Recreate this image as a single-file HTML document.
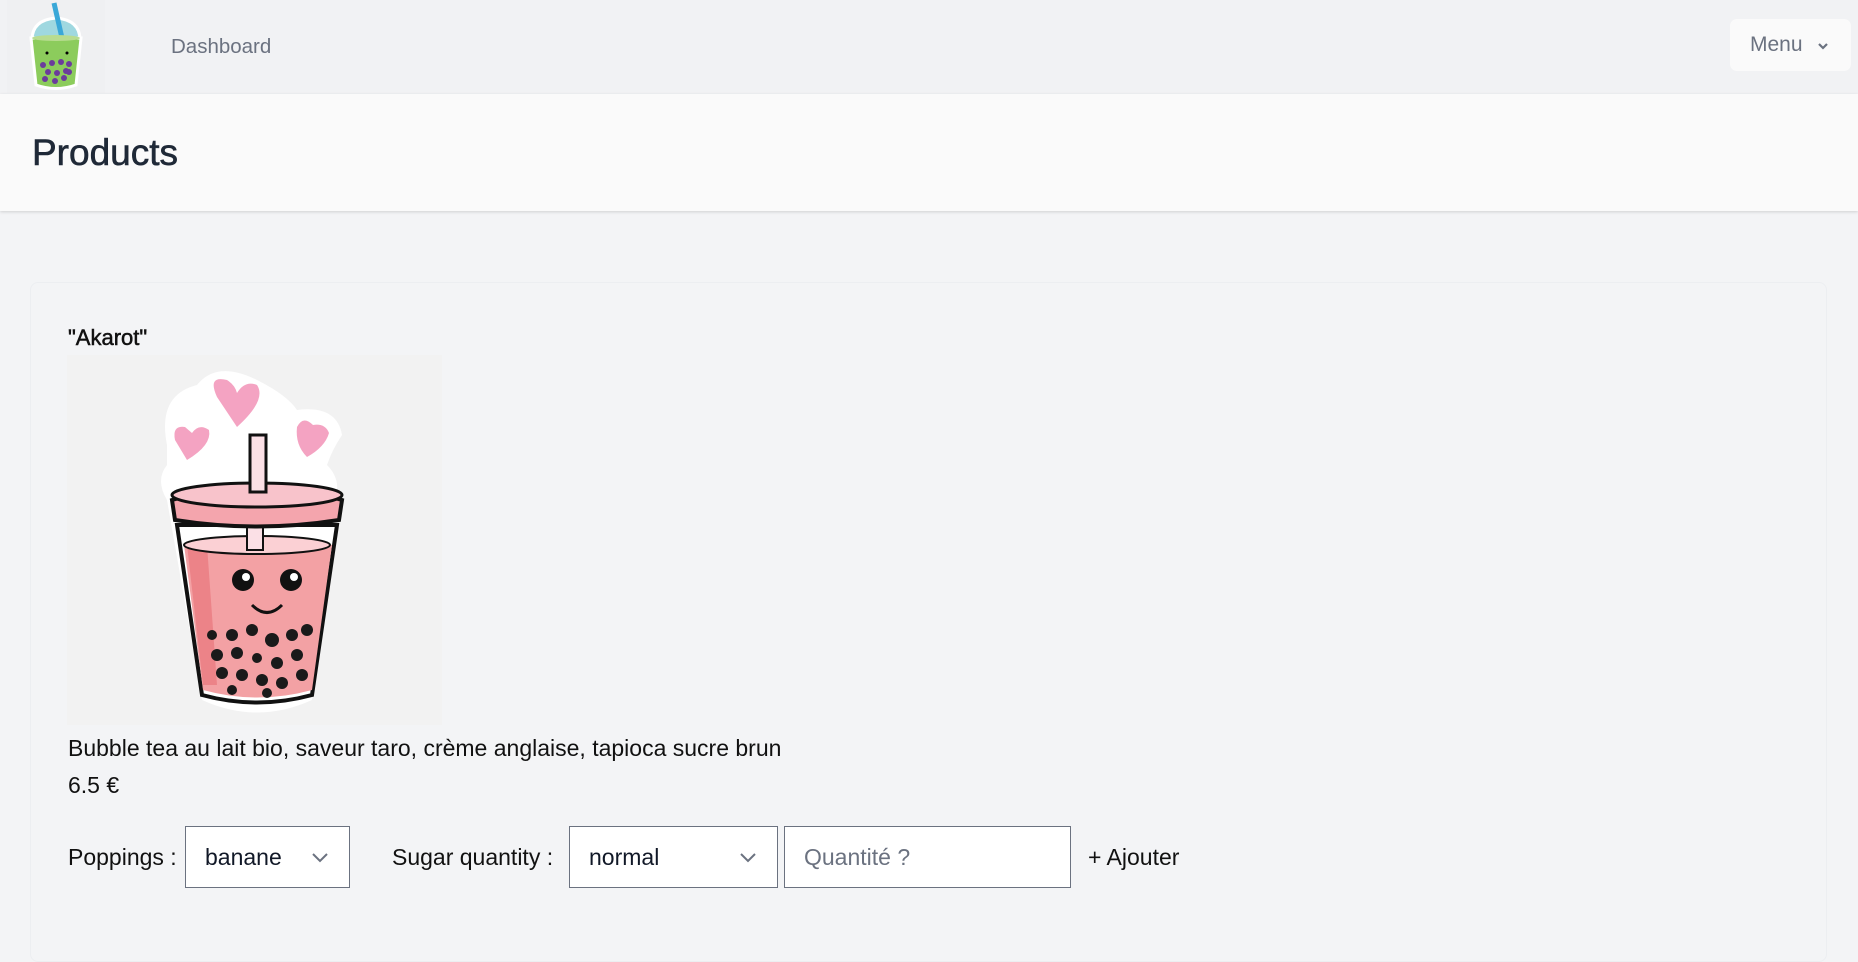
<!DOCTYPE html>
<html><head><meta charset="utf-8"><style>
*{box-sizing:border-box;margin:0;padding:0}
body{width:1858px;height:924px;background:#f3f4f6;font-family:"Liberation Sans",sans-serif;position:relative;overflow:hidden;color:#111827}
.nav{position:absolute;left:0;top:0;width:1858px;height:94px;background:#f1f2f4}
.logo{position:absolute;left:7px;top:0;width:98px;height:93px;background:#eff0f2}
.dash{position:absolute;left:171px;top:35px;font-size:20.5px;color:#6b7280}
.menu{position:absolute;left:1730px;top:19px;width:121px;height:52px;background:#fafafa;border-radius:7px;font-size:21px;color:#6b7280;padding:14px 0 0 20px}
.hdr{position:absolute;left:0;top:94px;width:1858px;height:117px;background:#fafafa;box-shadow:0 1px 3px rgba(0,0,0,.15)}
.hdr h1{position:absolute;left:32px;top:38px;font-size:37px;font-weight:500;color:#1f2937;-webkit-text-stroke:0.6px #1f2937}
.card{position:absolute;left:30px;top:282px;width:1797px;height:680px;background:#f3f4f6;border:1px solid #eceef1;border-radius:8px}
.t{position:absolute;font-size:23px;color:#111}
.img{position:absolute;left:67px;top:355px;width:375px;height:370px;background:#f2f2f2}
.sel{position:absolute;top:826px;height:62px;background:#fff;border:1px solid #6b7280;font-size:23px;padding:17px 0 0 19px}
.sel svg{position:absolute;right:20px;top:25px}
</style></head><body>
<div class="nav">
<div class="logo"><svg width="98" height="93" viewBox="0 0 98 93">
<path d="M25 40 Q25 20 49 18 Q73 20 73 40Z" fill="#9fd8e0" stroke="#fff" stroke-width="3"/>
<line x1="47" y1="3" x2="55" y2="38" stroke="#3aa8d8" stroke-width="5"/>
<path d="M24 38 L74 38 L69 85 Q49 92 29 85Z" fill="#8ccc5c" stroke="#fff" stroke-width="3"/>
<ellipse cx="49" cy="38" rx="24" ry="3" fill="#b8dc90"/>
<g fill="#6b3c9c"><circle cx="36" cy="65" r="3"/><circle cx="45" cy="63" r="3"/><circle cx="54" cy="62" r="3"/><circle cx="62" cy="64" r="3"/><circle cx="41" cy="72" r="3"/><circle cx="50" cy="73" r="3"/><circle cx="59" cy="71" r="3"/><circle cx="38" cy="79" r="3"/><circle cx="48" cy="81" r="3"/><circle cx="57" cy="78" r="3"/><circle cx="62" cy="72" r="3"/></g>
<circle cx="40" cy="53" r="1.5" fill="#000"/><circle cx="60" cy="53" r="1.5" fill="#000"/>
</svg></div>
<div class="dash">Dashboard</div>
<div class="menu">Menu <svg width="14" height="10" viewBox="0 0 14 10" style="margin-left:8px"><path d="M3 3 L7 7 L11 3" fill="none" stroke="#6b7280" stroke-width="2.2"/></svg></div>
</div>
<div class="hdr"><h1>Products</h1></div>
<div class="card"></div>
<div class="t" style="left:68px;top:325px;font-size:22px;-webkit-text-stroke:0.5px #111">"Akarot"</div>
<div class="img"><svg width="375" height="370" viewBox="0 0 375 370">
<path d="M100 90 Q90 40 130 30 Q150 5 190 25 Q220 40 230 55 Q270 50 275 80 Q265 95 260 110 Q275 125 268 145 L245 345 Q190 370 135 345 L100 145 Q88 125 100 110Z" fill="#fff"/>
<g fill="#f4a3c2"><path d="M150 42 Q140 20 160 25 Q168 30 170 38 Q178 25 190 30 Q200 45 170 72Z"/><path d="M108 85 Q105 70 118 72 L125 78 Q132 68 142 75 Q145 90 120 105Z"/><path d="M230 72 Q236 60 246 70 Q258 68 262 78 Q258 92 240 102 Q228 90 230 72Z"/></g>
<path d="M110 170 L270 170 L245 340 Q190 355 135 340Z" fill="#fff" stroke="#111" stroke-width="4"/>
<path d="M117 190 Q190 170 265 190 L245 335 Q190 350 136 335Z" fill="#f3a1a4"/>
<path d="M120 190 L140 190 L150 330 L136 330Z" fill="#ec8388"/>
<ellipse cx="190" cy="190" rx="73" ry="9" fill="#fbd0d4" stroke="#111" stroke-width="2"/>
<rect x="180" y="170" width="16" height="25" fill="#fbe0e6" stroke="#111" stroke-width="2"/>
<path d="M105 145 Q190 120 275 145 L272 165 Q190 178 108 165Z" fill="#f4a5ad" stroke="#111" stroke-width="4"/>
<ellipse cx="190" cy="140" rx="85" ry="12" fill="#f8c3cb" stroke="#111" stroke-width="3"/>
<rect x="183" y="80" width="16" height="57" fill="#fbe0e6" stroke="#111" stroke-width="3"/>
<circle cx="176" cy="225" r="11" fill="#111"/><circle cx="224" cy="225" r="11" fill="#111"/>
<circle cx="179" cy="222" r="4" fill="#fff"/><circle cx="227" cy="222" r="4" fill="#fff"/>
<path d="M185 250 Q200 265 215 250" fill="none" stroke="#111" stroke-width="3"/>
<g fill="#1a1a1a"><circle cx="145" cy="280" r="5"/><circle cx="165" cy="280" r="6"/><circle cx="185" cy="275" r="6"/><circle cx="205" cy="285" r="7"/><circle cx="225" cy="280" r="6"/><circle cx="240" cy="275" r="6"/><circle cx="150" cy="300" r="6"/><circle cx="170" cy="298" r="6"/><circle cx="190" cy="303" r="5"/><circle cx="210" cy="308" r="6"/><circle cx="230" cy="300" r="6"/><circle cx="155" cy="318" r="6"/><circle cx="175" cy="320" r="6"/><circle cx="195" cy="325" r="6"/><circle cx="215" cy="328" r="6"/><circle cx="235" cy="320" r="6"/><circle cx="165" cy="335" r="5"/><circle cx="200" cy="338" r="5"/></g>
</svg></div>
<div class="t" style="left:68px;top:735px">Bubble tea au lait bio, saveur taro, crème anglaise, tapioca sucre brun</div>
<div class="t" style="left:68px;top:772px">6.5 €</div>
<div class="t" style="left:68px;top:844px">Poppings :</div>
<div class="sel" style="left:185px;width:165px">banane<svg width="18" height="12" viewBox="0 0 18 12"><path d="M2 2 L9 9 L16 2" fill="none" stroke="#6b7280" stroke-width="2"/></svg></div>
<div class="t" style="left:392px;top:844px">Sugar quantity :</div>
<div class="sel" style="left:569px;width:209px">normal<svg width="18" height="12" viewBox="0 0 18 12"><path d="M2 2 L9 9 L16 2" fill="none" stroke="#6b7280" stroke-width="2"/></svg></div>
<div class="sel" style="left:784px;width:287px;color:#6b7280">Quantité ?</div>
<div class="t" style="left:1088px;top:844px">+ Ajouter</div>
</body></html>
